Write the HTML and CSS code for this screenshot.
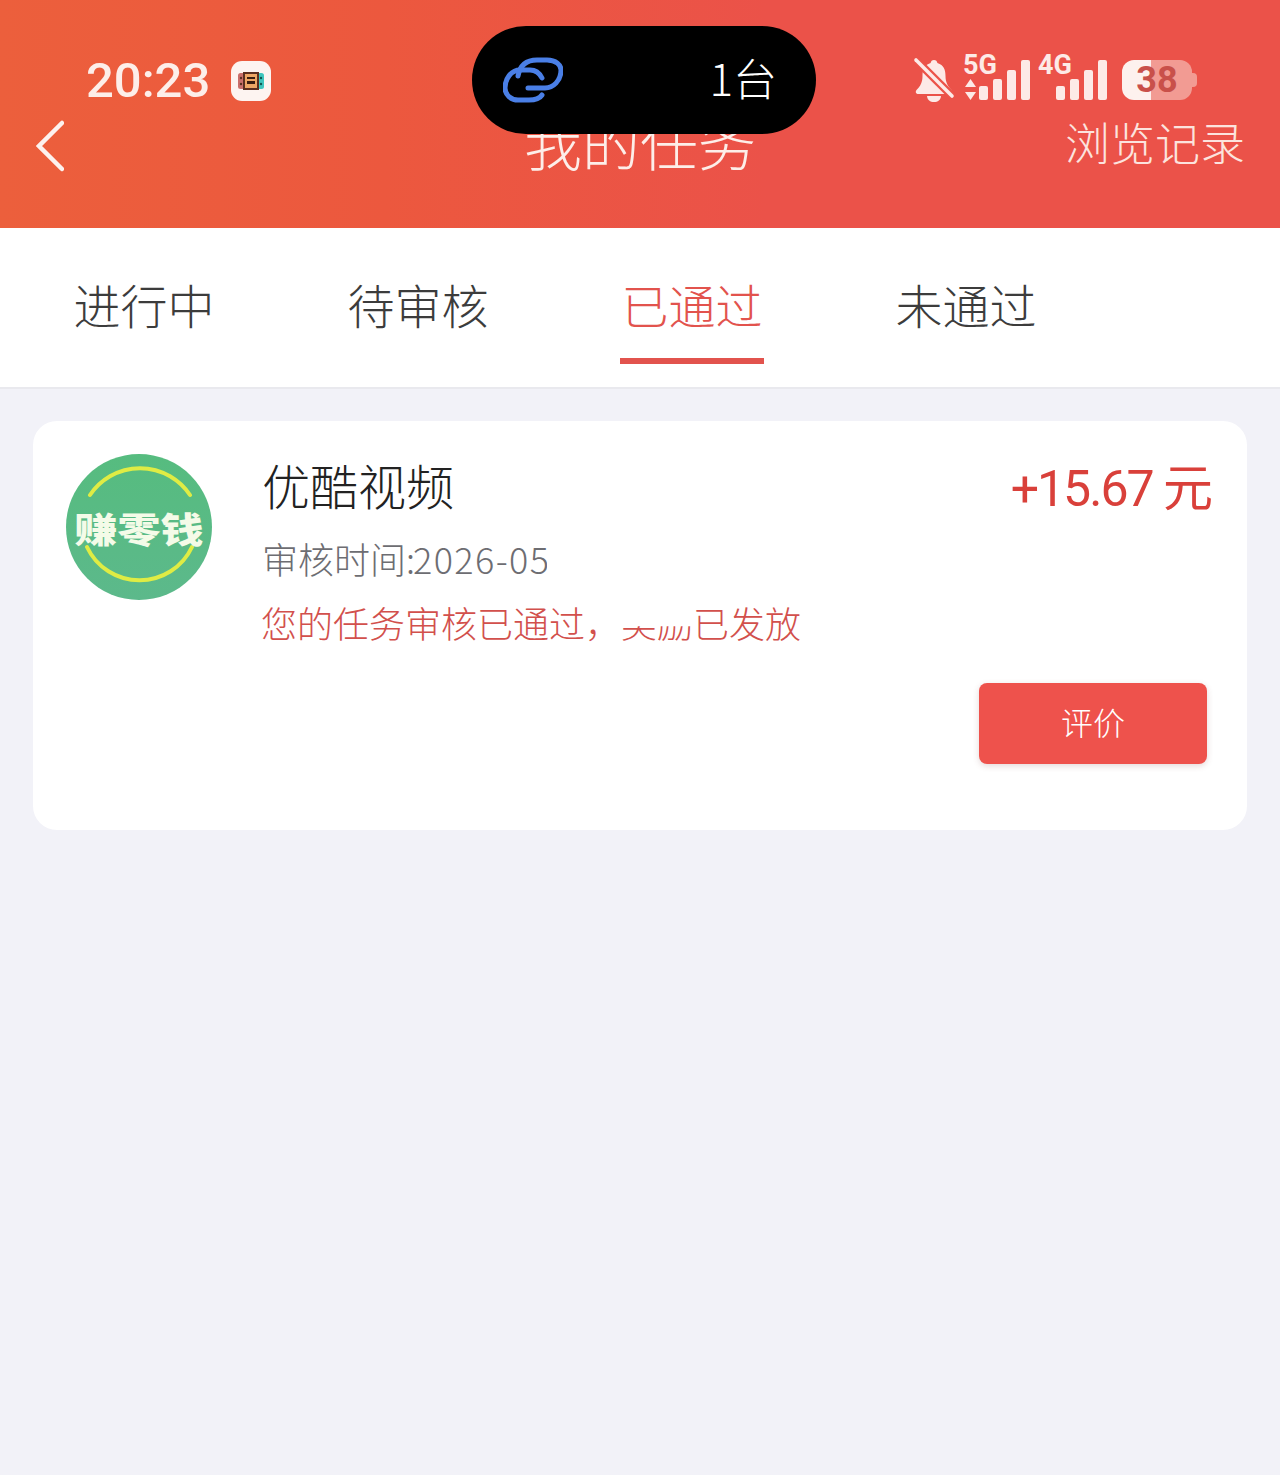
FILE: index.html
```html
<!DOCTYPE html>
<html lang="zh-CN">
<head>
<meta charset="utf-8">
<title>我的任务</title>
<link rel="stylesheet" href="styles.css">
</head>
<body>
<div class="page">
  <header class="header">
    <div class="status">
      <div class="status-left">
        <span class="time">20:23</span>
        <span class="app-badge">
          <svg width="26" height="20" viewBox="0 0 26 20">
            <rect x="0" y="2" width="7" height="16" rx="2.5" fill="#c96f6b"/>
            <rect x="19" y="2" width="7" height="16" rx="2.5" fill="#3fc5bd"/>
            <rect x="5" y="1" width="16" height="18" fill="#5b2f20"/>
            <rect x="7" y="3" width="12" height="14" fill="#eea765"/>
            <rect x="9" y="6" width="8" height="2" fill="#3a1d10"/>
            <rect x="9" y="10" width="8" height="3" fill="#3a1d10"/>
            <circle cx="3" cy="7" r="1.2" fill="#5b2f20"/><circle cx="3" cy="13" r="1.2" fill="#5b2f20"/>
            <circle cx="23" cy="7" r="1.2" fill="#14544f"/><circle cx="23" cy="13" r="1.2" fill="#14544f"/>
          </svg>
        </span>
      </div>
      <div class="status-right">
        <svg class="bell" width="42" height="46" viewBox="0 0 42 46">
          <path d="M21 3c-2 0-3 1-3.400 3C11 8 9.500 13 9.500 19c0 6-2 10-6 14-1.500 2-.5 4 2 4h31c2.500 0 3.500-2 2-4-4-4-6-8-6-14 0-6-1.500-11-8.100-13C24 4 23 3 21 3z" fill="#fdeae7"/>
          <path d="M14 39c.5 4 3 6 7 6s6.500-2 7-6z" fill="#fdeae7"/>
          <path d="M2 2l38 38" stroke="#ec5349" stroke-width="8"/>
          <path d="M3 3l36 36" stroke="#fdeae7" stroke-width="3.600" stroke-linecap="round"/>
        </svg>
        <div class="signal signal-5g">
          <span class="net">5G</span>
          <svg class="arrows" width="11" height="21" viewBox="0 0 11 21"><path d="M5.500 0L11 8H0zM5.500 21L0 13h11z" fill="#fdeae7"/></svg>
          <span class="bars"><i class="b1"></i><i class="b2"></i><i class="b3"></i><i class="b4"></i></span>
        </div>
        <div class="signal signal-4g">
          <span class="net">4G</span>
          <span class="bars"><i class="b1"></i><i class="b2"></i><i class="b3"></i><i class="b4"></i></span>
        </div>
        <div class="battery"><span class="battery-num">38</span></div>
      </div>
    </div>
    <div class="nav">
      <svg class="back" width="28" height="52" viewBox="0 0 28 52"><path d="M26 3L3 26l23 23" fill="none" stroke="#fdf1ee" stroke-width="4.500" stroke-linecap="round" stroke-linejoin="miter"/></svg>
      <h1 class="nav-title">我的任务</h1>
      <span class="nav-action">浏览记录</span>
    </div>
    <div class="island">
      <svg width="60" height="46" viewBox="0 0 60 46">
        <g fill="none" stroke="#4a7fe6" stroke-width="5" stroke-linecap="round">
          <path d="M15 19C17 8 24 3 34 3H44C53 3 58 8 58 13C58 24 50 31 42 31H25"/>
          <path d="M39 21C36 15 32 13 27 13H17C8 13 2 22 2 31C2 38 8 43 15 43H26C32 43 37 41 39 38"/>
        </g>
      </svg>
      <span class="island-text">1台</span>
    </div>
  </header>

  <nav class="tabs">
    <a class="tab">进行中</a>
    <a class="tab">待审核</a>
    <a class="tab tab-active">已通过</a>
    <a class="tab">未通过</a>
  </nav>

  <main class="content">
    <section class="card">
      <div class="card-top">
        <div class="logo">
          <svg class="logo-ring" width="146" height="146" viewBox="0 0 146 146">
            <defs>
              <linearGradient id="lg" x1="0" y1="0" x2="0" y2="1">
                <stop offset="0" stop-color="#56bc7f"/>
                <stop offset="1" stop-color="#5cb98b"/>
              </linearGradient>
            </defs>
            <circle cx="73" cy="73" r="73" fill="url(#lg)"/>
            <path d="M24 41A60 60 0 0 1 124 41M21 93A58 58 0 0 0 126 93" fill="none" stroke="#dfec44" stroke-width="4" stroke-linecap="round"/>
          </svg>
          <span class="logo-text">赚零钱</span>
        </div>
        <div class="info">
          <div class="info-title">优酷视频</div>
          <div class="info-time">审核时间:<span class="digits">2026-05</span></div>
          <div class="info-note">您的任务审核已通过，<span class="note-clipped">奖励</span>已发放</div>
        </div>
        <div class="amount">+15.67 元</div>
      </div>
      <div class="card-actions">
        <button class="btn">评价</button>
      </div>
    </section>
  </main>
</div>
</body>
</html>
```
FILE: styles.css
```css
* { box-sizing: border-box; }
html, body { margin: 0; padding: 0; }
body {
  font-family: "Noto Sans CJK SC", Roboto, sans-serif;
  font-weight: 200;
  background: #f2f2f8;
}
.page {
  width: 1280px;
  height: 1475px;
  background: #f2f2f8;
}

/* header */
.header {
  position: relative;
  height: 228px;
  padding-top: 53px;
  background: linear-gradient(90deg, #ec5f3c 0%, #ec583e 30%, #eb5249 60%, #eb5249 100%);
  overflow: hidden;
}
.status {
  display: flex;
  justify-content: space-between;
  height: 56px;
  padding: 0 88px 0 86px;
}
.status-left {
  display: flex;
  align-items: center;
  gap: 21px;
}
.time {
  font-family: Roboto, sans-serif;
  font-weight: 500;
  font-size: 49px;
  line-height: 56px;
  color: #fdeee9;
}
.app-badge {
  display: flex;
  align-items: center;
  justify-content: center;
  width: 40px;
  height: 40px;
  border-radius: 11px;
  background: #fdf4f1;
}
.status-right {
  display: flex;
  align-items: center;
}
.bell { margin: 0 8px 2px 0; }
.signal {
  position: relative;
  display: flex;
  align-items: flex-end;
  height: 46px;
  margin-top: -8px;
}
.signal-5g { width: 67px; margin-right: 8px; }
.signal-4g { width: 69px; margin-right: 15px; }
.net {
  position: absolute;
  left: 0;
  top: -2px;
  font-family: Roboto, sans-serif;
  font-weight: 700;
  font-size: 27px;
  line-height: 26px;
  color: #fdeae7;
}
.arrows { margin: 0 3px 0 2px; }
.bars {
  display: flex;
  align-items: flex-end;
  gap: 5px;
  margin-left: auto;
}
.bars i {
  display: block;
  width: 9px;
  border-radius: 2px;
  background: #fdeae7;
}
.bars .b1 { height: 14px; }
.bars .b2 { height: 21px; }
.bars .b3 { height: 30px; }
.bars .b4 { height: 40px; }
.battery {
  position: relative;
  width: 70px;
  height: 40px;
  margin-top: -2px;
  border-radius: 12px;
  background: linear-gradient(90deg, #fdf1ee 0 29px, #f29b93 29px);
  display: flex;
  align-items: center;
  justify-content: center;
}
.battery::after {
  content: "";
  position: absolute;
  right: -5px;
  top: 13px;
  width: 5px;
  height: 14px;
  border-radius: 0 4px 4px 0;
  background: #f29b93;
}
.battery-num {
  font-family: Roboto, sans-serif;
  font-weight: 700;
  font-size: 36px;
  line-height: 40px;
  color: #c9504a;
}
.nav {
  position: relative;
  display: flex;
  align-items: flex-start;
  justify-content: space-between;
  height: 80px;
  padding: 11px 35px 0 36px;
}
.nav-title {
  position: absolute;
  left: 0;
  right: 0;
  top: -9px;
  margin: 0;
  text-align: center;
  font-size: 58px;
  line-height: 82px;
  font-weight: 200;
  color: #fdeee9;
}
.nav-action {
  font-size: 45px;
  line-height: 50px;
  margin-top: -3px;
  color: #fce3de;
}
.island {
  position: absolute;
  left: 472px;
  top: 26px;
  width: 344px;
  height: 108px;
  border-radius: 54px;
  background: #000;
  display: flex;
  align-items: center;
  justify-content: space-between;
  padding: 0 39px 0 31px;
}
.island-text {
  margin-bottom: 6px;
  font-size: 44px;
  line-height: 56px;
  font-weight: 200;
  color: #fff;
}

/* tabs */
.tabs {
  display: flex;
  height: 161px;
  padding-left: 7px;
  background: #fff;
  border-bottom: 2px solid #e9e9ee;
}
.tab {
  position: relative;
  width: 274px;
  padding-top: 47px;
  text-align: center;
  font-size: 47px;
  line-height: 58px;
  color: #3c3c3c;
}
.tab-active { color: #e2534d; }
.tab-active::after {
  content: "";
  position: absolute;
  left: 65px;
  top: 130px;
  width: 144px;
  height: 6px;
  background: #e2534d;
}

/* card */
.content { padding: 32px 33px 0; }
.card {
  height: 409px;
  padding: 33px 35px 0 33px;
  border-radius: 24px;
  background: #fff;
}
.card-top {
  display: flex;
  align-items: flex-start;
  height: 229px;
}
.logo {
  position: relative;
  flex: none;
  width: 146px;
  height: 146px;
}
.logo-ring { display: block; }
.logo-text {
  position: absolute;
  left: 0;
  right: 0;
  top: 46px;
  text-align: center;
  font-size: 43px;
  line-height: 54px;
  font-weight: 900;
  color: #f4fbe8;
  white-space: nowrap;
  transform: scaleY(0.82);
}
.info {
  flex: 1;
  padding-left: 50px;
}
.info-title {
  margin-top: -3px;
  font-size: 48px;
  line-height: 66px;
  color: #222;
}
.info-time {
  width: 285px;
  margin-top: 14px;
  overflow: hidden;
  white-space: nowrap;
  font-size: 36px;
  line-height: 54px;
  color: #6d6d72;
}
.digits {
  letter-spacing: 1.4px;
  margin-left: -2px;
}
.info-note {
  margin-top: 10px;
  margin-left: -1px;
  white-space: nowrap;
  font-size: 36px;
  line-height: 54px;
  color: #d2504c;
}
.note-clipped {
  display: inline-block;
  clip-path: inset(58% 0 0 0);
}
.amount {
  flex: none;
  margin-top: 2px;
  margin-right: 1px;
  font-family: Roboto, "Noto Sans CJK SC", sans-serif;
  font-weight: 400;
  font-size: 50px;
  line-height: 66px;
  letter-spacing: -2px;
  color: #d9403a;
  white-space: nowrap;
}
.card-actions {
  display: flex;
  justify-content: flex-end;
  padding-right: 5px;
}
.btn {
  width: 228px;
  height: 81px;
  padding-bottom: 6px;
  border: 0;
  border-radius: 8px;
  background: #ee524c;
  box-shadow: 0 2px 6px rgba(120, 60, 60, 0.2);
  font-family: inherit;
  font-weight: 300;
  font-size: 32px;
  color: #fff;
}
```
